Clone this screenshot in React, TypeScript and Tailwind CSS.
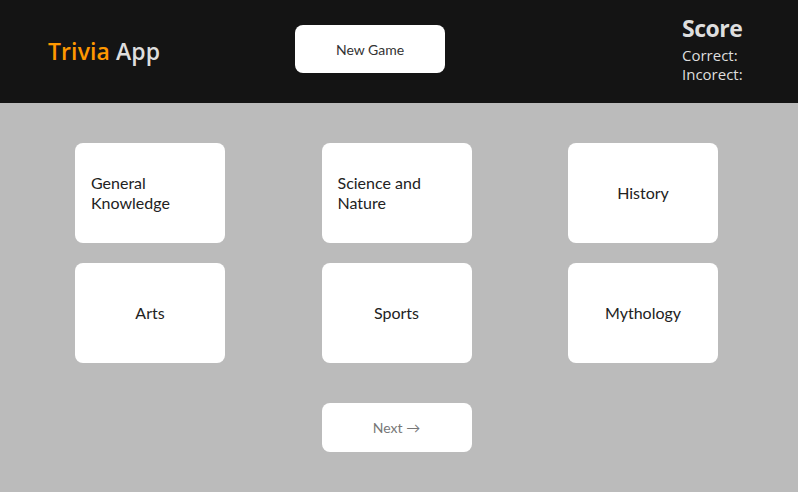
const categories = [
  "General Knowledge",
  "Science and Nature",
  "History",
  "Arts",
  "Sports",
  "Mythology",
];

export default function App() {
  return (
    <div className="min-h-[492px] bg-[#bbbbbb] font-['Lato','Noto_Sans',sans-serif]">
      <header className="flex h-[103px] items-center bg-[#141414] pl-[48px] pr-[54px]">
        <h1 className="w-[112px] whitespace-nowrap font-['Open_Sans',sans-serif] text-[23px] font-semibold tracking-[0.1px]">
          <span className="text-[#ff9800]">Trivia</span>{" "}
          <span className="text-[#dedede]">App</span>
        </h1>
        <button
          type="button"
          className="mb-[5px] ml-[135px] h-[48px] w-[150px] rounded-lg bg-white text-[14px] text-[#333]"
        >
          New Game
        </button>
        <div className="mb-[4px] ml-auto w-[62px] font-['Open_Sans',sans-serif] text-[#dedede]">
          <p className="mb-[4px] text-[23px] font-bold leading-[27px] tracking-[-0.5px]">Score</p>
          <p className="text-[15px] leading-[19px]">Correct:</p>
          <p className="text-[15px] leading-[19px]">Incorect:</p>
        </div>
      </header>

      <main className="grid grid-cols-[repeat(3,150px)] gap-x-[96.5px] gap-y-5 pl-[75px] pt-10">
        {categories.map((name) => (
          <button
            key={name}
            type="button"
            className="flex h-[100px] items-center justify-center rounded-lg bg-white px-4 text-left text-[16px] leading-[20px] text-[#222]"
          >
            {name}
          </button>
        ))}
        <button
          type="button"
          className="col-start-2 mt-5 h-[49px] w-[150px] rounded-lg bg-white text-[14px] text-[#777]"
        >
          Next →
        </button>
      </main>
    </div>
  );
}
